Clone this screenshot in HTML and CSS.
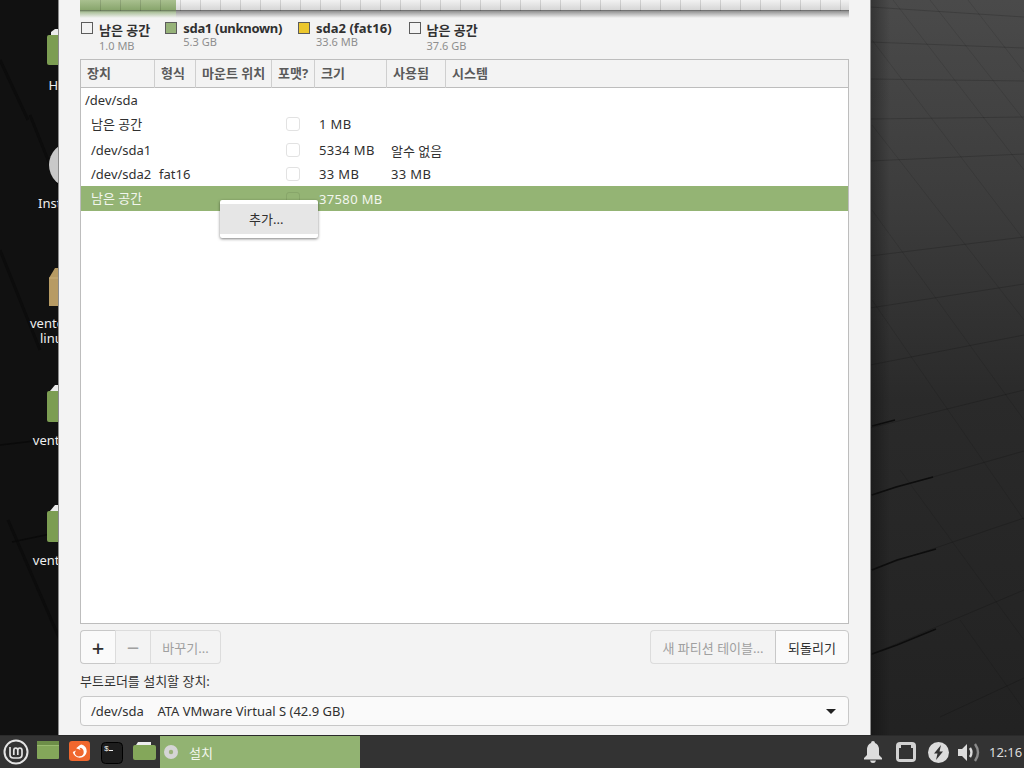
FILE: index.html
```html
<!DOCTYPE html>
<html lang="ko">
<head>
  <meta charset="UTF-8">
  <title>설치</title>
  <link rel="stylesheet" href="styles.css">
</head>
<body>
  <div class="desktop">
    <svg class="wallpaper" width="1024" height="768" viewBox="0 0 1024 768">
      <defs>
        <linearGradient id="wallRight" x1="0" y1="0" x2="0" y2="1">
          <stop offset="0" stop-color="#4a4a4a"/>
          <stop offset="0.27" stop-color="#3c3c3c"/>
          <stop offset="0.52" stop-color="#2a2a2a"/>
          <stop offset="1" stop-color="#212121"/>
        </linearGradient>
        <linearGradient id="wallEdge" x1="0" y1="0" x2="1" y2="0">
          <stop offset="0" stop-color="#000" stop-opacity=".3"/>
          <stop offset="1" stop-color="#000" stop-opacity="0"/>
        </linearGradient>
      </defs>
      <rect width="60" height="768" fill="#111"/>
      <rect x="870" width="154" height="768" fill="url(#wallRight)"/>
      <rect x="870" width="20" height="768" fill="url(#wallEdge)"/>
      <path d="M0 60 L28 120 M30 115 L60 190 M0 250 L40 350 M8 520 L60 640" stroke="#0c0c0c" stroke-width="3" fill="none"/>
      <path d="M0 445 L60 438 M12 542 L60 532" stroke="#0a0a0a" stroke-width="1.5" fill="none"/>
      <g stroke="#000" stroke-opacity=".16" fill="none">
        <path d="M870 7 L1024 17 M870 42 L1024 48 M870 79 L1024 81 M870 119 L1024 117 M870 161 L1024 154"/>
        <path d="M870 256 L1024 237 M870 308 L1024 284 M870 365 L1024 335 M870 428 L1024 390 M870 495 L1024 451 M870 570 L1024 518 M870 655 L1024 590 M940 717 L1024 678"/>
        <path d="M893 0 L1024 170 M930 0 L1024 120 M968 0 L1024 72 M872 40 L1024 240 M872 125 L1024 320 M872 210 L1024 420 M872 300 L1024 520 M900 470 L1024 640 M960 620 L1024 710" stroke-opacity=".1"/>
      </g>
      <path d="M872 426 L895 420 M872 495 L896 487 L933 477 M872 570 L897 560 L936 549 M872 654 L897 645 L936 629" stroke="#0d0d0d" stroke-width="1.5" fill="none"/>
    </svg>

    <div class="desk-icon icon-home">
      <svg width="40" height="36" viewBox="0 0 40 36"><path d="M4 3 L8 0 H30 V8 H4Z" fill="#ececec"/><rect y="6" width="40" height="30" rx="2" fill="#7c9d52"/></svg>
      <span class="desk-label">Home</span>
    </div>
    <div class="desk-icon icon-install">
      <svg width="46" height="46" viewBox="0 0 46 46"><circle cx="23" cy="23" r="23" fill="#c9c9c9"/><circle cx="23" cy="23" r="5" fill="#eee"/></svg>
      <span class="desk-label">Install</span>
    </div>
    <div class="desk-icon icon-ventoy">
      <svg width="40" height="38" viewBox="0 0 40 38"><path d="M0 10 L6 0 H40 V38 H0Z" fill="#b79b64"/><path d="M0 10 H40" stroke="#c9ae78"/></svg>
      <span class="desk-label">ventoy-1.0.96-<br>linux.tar.gz</span>
    </div>
    <div class="desk-icon icon-folder-a">
      <svg width="40" height="37" viewBox="0 0 40 37"><path d="M3 6 L8 0 H30 V8 H3Z" fill="#ececec"/><rect y="6" width="40" height="31" rx="2" fill="#7c9d52"/></svg>
      <span class="desk-label">ventoy-1.0.9</span>
    </div>
    <div class="desk-icon icon-folder-b">
      <svg width="40" height="37" viewBox="0 0 40 37"><path d="M3 6 L8 0 H30 V8 H3Z" fill="#ececec"/><rect y="6" width="40" height="31" rx="2" fill="#7c9d52"/></svg>
      <span class="desk-label">ventoy-1.0.9</span>
    </div>

    <div class="window">
      <div class="part-bar">
        <div class="part-used"></div>
      </div>

      <div class="legend">
        <div class="legend-item legend-low">
          <i class="swatch"></i>
          <div><b>남은 공간</b><small>1.0 MB</small></div>
        </div>
        <div class="legend-item legend-wide">
          <i class="swatch swatch-green"></i>
          <div><b>sda1 (unknown)</b><small>5.3 GB</small></div>
        </div>
        <div class="legend-item legend-fat">
          <i class="swatch swatch-yellow"></i>
          <div><b>sda2 (fat16)</b><small>33.6 MB</small></div>
        </div>
        <div class="legend-item legend-low">
          <i class="swatch"></i>
          <div><b>남은 공간</b><small>37.6 GB</small></div>
        </div>
      </div>

      <div class="table">
        <div class="row head">
          <span>장치</span><span>형식</span><span>마운트 위치</span><span>포맷?</span><span>크기</span><span>사용됨</span><span>시스템</span>
        </div>
        <div class="row row-disk"><span>/dev/sda</span></div>
        <div class="row row-free">
          <span class="cell-kr">남은 공간</span><span></span><span></span><span><i class="check"></i></span><span class="num">1 MB</span><span></span><span></span>
        </div>
        <div class="row row-a">
          <span>/dev/sda1</span><span></span><span></span><span><i class="check"></i></span><span class="num">5334 MB</span><span>알수 없음</span><span></span>
        </div>
        <div class="row row-b">
          <span>/dev/sda2</span><span>fat16</span><span></span><span><i class="check"></i></span><span class="num">33 MB</span><span class="num">33 MB</span><span></span>
        </div>
        <div class="row row-sel">
          <span class="cell-kr">남은 공간</span><span></span><span></span><span><i class="check"></i></span><span class="num">37580 MB</span><span></span><span></span>
        </div>
      </div>

      <div class="toolbar">
        <div class="btn-group">
          <button class="btn btn-add">+</button>
          <button class="btn btn-minus" disabled>−</button>
          <button class="btn btn-change" disabled>바꾸기...</button>
        </div>
        <div class="btn-group">
          <button class="btn btn-new" disabled>새 파티션 테이블...</button>
          <button class="btn btn-revert">되돌리기</button>
        </div>
      </div>

      <div class="boot-label">부트로더를 설치할 장치:</div>
      <div class="combo">
        <span>/dev/sda&nbsp;&nbsp;&nbsp;&nbsp;ATA VMware Virtual S (42.9 GB)</span>
        <i class="combo-arrow"></i>
      </div>
    </div>

    <div class="menu">
      <div class="menu-item">추가...</div>
    </div>

    <div class="panel">
      <div class="launchers">
        <svg class="mint" width="26" height="26" viewBox="0 0 26 26" fill="none" stroke="#e4e4e4">
          <circle cx="13" cy="13" r="11.5" stroke-width="2"/>
          <path d="M7 8 V15.5 Q7 19 10.5 19 H15.5 Q19 19 19 15.5 V11.5 Q19 9 16.8 9 Q14.8 9 14.8 11.5 V16 M14.8 11.5 Q14.8 9 12.8 9 Q10.8 9 10.8 11.5 V16" stroke-width="1.7"/>
        </svg>
        <svg class="app-files" width="22" height="18" viewBox="0 0 22 18"><rect width="22" height="18" rx="1" fill="#84a75a"/><rect width="22" height="4" fill="#6d8e48"/><path d="M0 4.5 H22" stroke="#9abb70"/></svg>
        <svg class="app-fox" width="21" height="20" viewBox="0 0 20 20" preserveAspectRatio="none"><rect width="20" height="20" rx="3" fill="#f0672e"/><path d="M12 3.5 A6.7 6.7 0 1 1 3.6 11 L6.6 9.5 L5.5 12 A4.3 4.3 0 1 0 10 6.8 L11 9 L6.8 7.2 L10.5 4Z" fill="#fff"/></svg>
        <svg class="app-term" width="22" height="22" viewBox="0 0 22 22"><rect x=".5" y=".5" width="21" height="21" rx="4" fill="#1d1d1d" stroke="#000"/><text x="3" y="9" class="term-text">$</text><path d="M8 8.5 H12" stroke="#eee"/></svg>
        <svg class="app-folder" width="23" height="18" viewBox="0 0 23 18"><path d="M3 3 L5 0 H18 V4 H3Z" fill="#eee"/><rect y="3" width="23" height="15" rx="2" fill="#84a75a"/></svg>
      </div>
      <div class="task">
        <svg width="14" height="14" viewBox="0 0 14 14"><circle cx="7" cy="7" r="7" fill="#d5d5d5"/><circle cx="7" cy="7" r="2.2" fill="#9bb37a"/></svg>
        <span>설치</span>
      </div>
      <div class="tray">
        <svg class="tray-bell" width="18" height="22" viewBox="0 0 18 22"><path d="M9 0 Q11 0 11 2 Q15 3.5 15 9 V14 L18 17 V18.5 H0 V17 L3 14 V9 Q3 3.5 7 2 Q7 0 9 0Z M6 19.5 H12 Q11.5 22 9 22 Q6.5 22 6 19.5Z" fill="#dcdcdc"/></svg>
        <svg class="tray-box" width="20" height="20" viewBox="0 0 20 20"><rect width="20" height="20" rx="4" fill="#d2d2d2"/><path d="M3 6 H5 V3 H15 V6 H17 V17 H3Z" fill="#333"/></svg>
        <svg class="tray-power" width="21" height="21" viewBox="0 0 21 21"><circle cx="10.5" cy="10.5" r="10.5" fill="#dcdcdc"/><path d="M13 3 L6 11.5 H9.5 L8 18 L15 9.5 H11.5Z" fill="#333"/></svg>
        <svg class="tray-sound" width="24" height="21" viewBox="0 0 24 21" fill="none"><path d="M0 7 H4 L9 2 V19 L4 14 H0Z" fill="#dcdcdc"/><path d="M12 6 Q15 10.5 12 15" stroke="#dcdcdc" stroke-width="2.4"/><path d="M17 2 Q23 10.5 17 19" stroke="#8a8a8a" stroke-width="2.4"/></svg>
        <span class="clock">12:16</span>
      </div>
    </div>
  </div>
</body>
</html>
```

FILE: styles.css
```css
* {
  margin: 0;
  padding: 0;
  box-sizing: border-box;
}
html, body {
  width: 1024px;
  height: 768px;
  overflow: hidden;
}
body {
  font-family: "Noto Sans", "Noto Sans CJK KR", sans-serif;
  font-size: 13px;
  color: #303030;
  background: #111;
}
.desktop {
  position: relative;
  width: 1024px;
  height: 768px;
  overflow: hidden;
}
.wallpaper {
  position: absolute;
  left: 0;
  top: 0;
}

/* desktop icons, mostly hidden behind the window */
.desk-icon {
  position: absolute;
  width: 90px;
  display: flex;
  flex-direction: column;
  align-items: center;
  color: #eee;
  font-size: 13px;
  line-height: 15px;
  text-align: center;
}
.desk-label {
  margin-top: 13px;
  white-space: nowrap;
}
.icon-home { left: 22px; top: 29px; }
.icon-install { left: 27px; top: 142px; }
.icon-install .desk-label { margin-top: 8px; align-self: flex-start; margin-left: 11px; }
.icon-ventoy { left: 24px; top: 268px; }
.icon-ventoy .desk-label { margin-top: 10px; padding-left: 8px; }
.icon-folder-a { left: 22px; top: 385px; }
.icon-folder-a .desk-label { margin-top: 11px; padding-left: 6px; }
.icon-folder-b { left: 22px; top: 505px; }
.icon-folder-b .desk-label { margin-top: 11px; padding-left: 6px; }

/* installer window */
.window {
  position: absolute;
  left: 59px;
  top: 0;
  width: 812px;
  height: 735px;
  padding: 0 21px;
  background: #f3f3f3;
  border-right: 1px solid #8c8c8c;
  box-shadow: -1px 0 0 #8c8c8c;
  display: flex;
  flex-direction: column;
}
.part-bar {
  height: 18px;
  background:
    repeating-linear-gradient(to right, transparent 0, transparent 19px, rgba(0,0,0,.13) 19px, rgba(0,0,0,.13) 20px) 1px 0 / auto 11px no-repeat,
    linear-gradient(to bottom, #f2f2f2 0, #d6d6d6 10px, #555 10px, #8f8f8f 11px, #f3f3f3 18px);
}
.part-used {
  width: 96px;
  height: 18px;
  background:
    repeating-linear-gradient(to right, transparent 0, transparent 19px, rgba(0,0,0,.13) 19px, rgba(0,0,0,.13) 20px) 1px 0 / auto 11px no-repeat,
    linear-gradient(to bottom, #a9c08f 0, #88a56c 10px, #5e7050 10px, #aabf99 12px, #f3f3f3 18px);
}
.legend {
  display: flex;
  height: 38px;
  padding-left: 1px;
  margin-top: 3px;
}
.legend-item {
  display: flex;
  align-items: flex-start;
  gap: 6px;
  margin-right: 15px;
}
.legend-wide {
  margin-right: 16px;
}
.legend-fat {
  margin-right: 17px;
}
.legend-item b {
  display: block;
  font-size: 13px;
  line-height: 14px;
  font-weight: 700;
  color: #303030;
}
.legend-item small {
  display: block;
  font-size: 11px;
  line-height: 14px;
  color: #8e8e8e;
}
.legend-wide b {
  letter-spacing: -.3px;
}
.legend-low > div {
  padding-top: 2px;
}
.legend-low small {
  margin-top: 2px;
}
.swatch {
  width: 12px;
  height: 12px;
  border: 1px solid #5c5c5c;
  background: #f3f3f3;
  margin-top: 1px;
  flex: none;
}
.swatch-green { background: #96b279; }
.swatch-yellow { background: #ecc72d; }

/* partition table */
.table {
  height: 565px;
  background: #fff;
  border: 1px solid #bdbdbd;
}
.row {
  display: grid;
  grid-template-columns: 74px 41px 76px 43px 72px 59px 1fr;
  align-items: center;
}
.head {
  height: 28px;
  background: #f3f3f3;
  border-bottom: 1px solid #bdbdbd;
  font-weight: 700;
  color: #5a5a5a;
}
.head span {
  height: 28px;
  line-height: 27px;
  padding-left: 6px;
  border-right: 1px solid #cfcfcf;
}
.head span:last-child {
  border-right: none;
}
.row-disk {
  height: 24px;
  padding-left: 4px;
}
.row-free { height: 24px; }
.row-a {
  height: 26px;
  padding-top: 2px;
}
.row-b { height: 24px; }
.row-sel {
  height: 25px;
  background: #94b474;
  color: #f2f6ee;
}
.row span {
  white-space: nowrap;
}
.row .cell-kr {
  margin-bottom: 2px;
}
.row:not(.head):not(.row-disk) span {
  padding-left: 4px;
}
.row:not(.head):not(.row-disk) span:first-child {
  padding-left: 10px;
}
.row .num {
  letter-spacing: .35px;
}
.check {
  display: block;
  width: 14px;
  height: 14px;
  margin-left: 10px;
  background: #fff;
  border: 1px solid #e2e2e2;
  border-radius: 3px;
}
.row-sel .check {
  background: #94b474;
  border-color: #88a66a;
}

/* buttons under the table */
.toolbar {
  display: flex;
  justify-content: space-between;
  margin-top: 6px;
  height: 34px;
}
.btn-group {
  display: flex;
}
.btn {
  font: inherit;
  height: 34px;
  background: #fafafa;
  border: 1px solid #c8c8c8;
  color: #303030;
}
.btn:disabled {
  background: #f3f3f3;
  border-color: #dcdcdc;
  color: #a0a0a0;
}
.btn-add {
  width: 36px;
  font-size: 22px;
  font-weight: 500;
  line-height: 1;
  border-radius: 4px 0 0 4px;
  border-right-color: #dcdcdc;
}
.btn-minus {
  width: 35px;
  font-size: 22px;
  line-height: 1;
  border-left: none;
}
.btn-change {
  width: 70px;
  border-left: none;
  border-radius: 0 4px 4px 0;
}
.btn-new {
  width: 125px;
  border-radius: 4px 0 0 4px;
  border-right: none;
}
.btn-revert {
  width: 74px;
  border-radius: 0 4px 4px 0;
}
.boot-label {
  margin-top: 8px;
  height: 24px;
  line-height: 18px;
}
.combo {
  height: 30px;
  background: #fafafa;
  border: 1px solid #c8c8c8;
  border-radius: 4px;
  display: flex;
  align-items: center;
  justify-content: space-between;
  padding: 0 12px 0 10px;
}
.combo-arrow {
  width: 0;
  height: 0;
  border-left: 5px solid transparent;
  border-right: 5px solid transparent;
  border-top: 5px solid #222;
}

/* context menu */
.menu {
  position: absolute;
  left: 220px;
  top: 200px;
  width: 98px;
  height: 38px;
  padding: 4px 0;
  background: #fff;
  border-radius: 2px;
  box-shadow: 0 1px 3px rgba(0,0,0,.5);
}
.menu-item {
  height: 30px;
  line-height: 30px;
  padding-left: 29px;
  background: #e6e6e6;
  font-size: 13px;
}

/* bottom panel */
.panel {
  position: absolute;
  left: 0;
  top: 735px;
  width: 1024px;
  height: 33px;
  background: #333;
  border-top: 1px solid #2a2a2a;
  display: flex;
  align-items: stretch;
}
.launchers {
  width: 160px;
  display: flex;
  align-items: center;
  padding-left: 3px;
}
.launchers svg {
  margin-right: 10px;
  flex: none;
}
.launchers .mint {
  margin-right: 8px;
}
.launchers .app-files {
  margin-bottom: 4px;
}
.launchers .app-fox {
  margin-right: 11px;
  margin-bottom: 2px;
}
.launchers .app-term {
  margin-top: 1px;
}
.launchers .app-folder {
  margin-bottom: 2px;
}
.term-text {
  font: 8px "Liberation Mono", monospace;
  fill: #eee;
}
.task {
  width: 200px;
  background: #92b372;
  display: flex;
  align-items: center;
  gap: 11px;
  padding-left: 4px;
  color: #f4f7ef;
  font-size: 13px;
}
.tray {
  margin-left: auto;
  display: flex;
  align-items: center;
  padding-right: 2px;
}
.tray-box { margin-left: 14px; }
.tray-power { margin-left: 12px; }
.tray-sound { margin-left: 9px; }
.clock {
  margin-left: 7px;
  color: #dcdcdc;
  font-size: 13px;
  width: 33px;
  white-space: nowrap;
}
```
